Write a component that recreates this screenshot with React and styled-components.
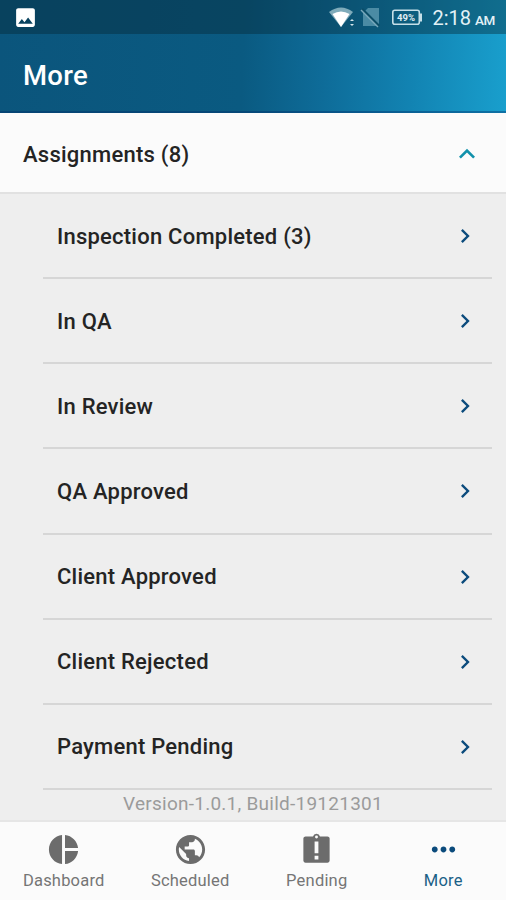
import React from "react";
import styled, { createGlobalStyle } from "styled-components";
import {
  MdPieChart,
  MdPublic,
  MdMoreHoriz,
  MdChevronRight,
  MdExpandLess,
  MdImage
} from "react-icons/md";

const colors = {
  text: "#242424",
  grey: "#6c6c6c",
  navy: "#0b4b7c",
  teal: "#1191ab"
};

const GlobalStyle = createGlobalStyle`
  * {
    box-sizing: border-box;
  }
  body {
    margin: 0;
    font-family: Roboto, "Liberation Sans", sans-serif;
    color: ${colors.text};
  }
`;
const Screen = styled.div`
  display: flex;
  flex-direction: column;
  width: 506px;
  height: 900px;
  overflow: hidden;
  background: #eeeeee;
`;
const Header = styled.header`
  flex: none;
  height: 113px;
  border-bottom: 2px solid rgba(0, 45, 105, 0.4);
  background: linear-gradient(
    92deg,
    #0b557c 0%,
    #0a5a81 48%,
    #0e6c99 64%,
    #1283b2 81%,
    #199fcd 100%
  );
  background-origin: border-box;
`;
const StatusBar = styled.div`
  display: flex;
  align-items: center;
  justify-content: space-between;
  height: 34px;
  padding: 0 11px 0 13px;
  color: #ffffff;
  background: rgba(5, 37, 50, 0.4);
`;
const StatusIcons = styled.div`
  display: flex;
  align-items: center;
`;
const Clock = styled.div`
  display: flex;
  align-items: baseline;
  margin-left: 9px;
  padding-top: 4px;
  font-size: 20px;
  line-height: 30px;
  color: #e3f1f6;
`;
const Meridiem = styled.span`
  margin-left: 4px;
  font-size: 13.5px;
  font-weight: 500;
  letter-spacing: -0.4px;
`;
const Title = styled.h1`
  margin: 0;
  padding-left: 23px;
  font-size: 27.5px;
  font-weight: 500;
  line-height: 83px;
  letter-spacing: 0.3px;
  color: #ffffff;
`;
const SectionHeader = styled.div`
  display: flex;
  flex: none;
  align-items: center;
  justify-content: space-between;
  height: 81px;
  padding: 3px 23px 0;
  border-bottom: 2px solid #e1e1e1;
  font-size: 22px;
  font-weight: 500;
  letter-spacing: 0.25px;
  background: #fbfbfb;
  svg {
    color: ${colors.teal};
  }
`;
const List = styled.div`
  flex: none;
  margin: 0 14px 0 43px;
`;
const Row = styled.div`
  display: flex;
  align-items: center;
  justify-content: space-between;
  height: 85.15px;
  padding: 1px 13.5px 0 14px;
  border-bottom: 2px solid #d6d6d6;
  font-size: 22px;
  font-weight: 500;
  letter-spacing: 0.23px;
  svg {
    color: ${colors.navy};
  }
`;
const Version = styled.div`
  flex: 1;
  font-size: 19px;
  line-height: 27px;
  letter-spacing: 0.25px;
  text-align: center;
  color: #9b9b9b;
`;
const TabBar = styled.nav`
  display: flex;
  flex: none;
  height: 80px;
  border-top: 2px solid #e6e6e6;
  background: #fbfbfb;
`;
const Tab = styled.div`
  display: flex;
  flex: 1;
  flex-direction: column;
  align-items: center;
  padding: 10px 0 0 1px;
  font-size: 16.5px;
  line-height: 27px;
  letter-spacing: 0.2px;
  color: ${props => (props.$active ? "#1b6187" : "#757575")};
  svg {
    color: ${props => (props.$active ? colors.navy : colors.grey)};
  }
`;

const StatusSvg = () => (
  <svg width="94" height="34" viewBox="0 0 94 34">
    <path d="M0 12Q12 3 24 12L12 27Z" fill="#7fabba" />
    <path d="M3.5 14Q12 9 20.5 14L12 27Z" fill="#ffffff" />
    <path d="M21 21l2-2 2 2zM21 24l2 2 2-2z" fill="#d5e5eb" />
    <path d="M39 8h11v17L35 12z" fill="#4b8ba4" />
    <path d="M34 10v16h15z" fill="#4b8ba4" />
    <path d="M33 9l17 17" stroke="#0c4e68" strokeWidth="2.5" />
    <path d="M32 10l17 17" stroke="#7aa9bc" strokeWidth="1.5" />
    <rect
      x="63.8"
      y="10.3"
      width="26.5"
      height="14"
      rx="2"
      fill="none"
      stroke="#c5dfe8"
      strokeWidth="1.6"
    />
    <path d="M92 13.5v8" stroke="#c5dfe8" strokeWidth="2" />
    <text
      x="77"
      y="21"
      fill="#e0eff5"
      fontSize="9.5"
      fontWeight="700"
      textAnchor="middle"
    >
      49%
    </text>
  </svg>
);

// clipboard with a tall cut-out exclamation mark
const PendingIcon = ({ size }) => (
  <svg width={size} height={size} viewBox="0 0 24 24" fill="currentColor">
    <path
      fillRule="evenodd"
      d="M4.5 3h5.1a2.5 2.5 0 0 1 4.8 0h5.1C20.5 3 21 3.7 21 4.5v15c0 .8-.6 1.5-1.5 1.5h-15C3.6 21 3 20.3 3 19.5v-15C3 3.7 3.6 3 4.5 3zM10.7 6.5v8h2.6v-8zM10.7 16.3v2.5h2.6v-2.5zM12 2.4a1 1 0 1 0 0 2 1 1 0 0 0 0-2z"
    />
  </svg>
);

const assignments = [
  "Inspection Completed (3)",
  "In QA",
  "In Review",
  "QA Approved",
  "Client Approved",
  "Client Rejected",
  "Payment Pending"
];

const tabs = [
  { label: "Dashboard", Icon: MdPieChart },
  { label: "Scheduled", Icon: MdPublic },
  { label: "Pending", Icon: PendingIcon },
  { label: "More", Icon: MdMoreHoriz, active: true }
];

const App = () => {
  return (
    <Screen>
      <GlobalStyle />
      <Header>
        <StatusBar>
          <MdImage size={25} />
          <StatusIcons>
            <StatusSvg />
            <Clock>
              2:18<Meridiem>AM</Meridiem>
            </Clock>
          </StatusIcons>
        </StatusBar>
        <Title>More</Title>
      </Header>
      <SectionHeader>
        Assignments (8)
        <MdExpandLess size={32} />
      </SectionHeader>
      <List>
        {assignments.map(name => (
          <Row key={name}>
            {name}
            <MdChevronRight size={28} />
          </Row>
        ))}
      </List>
      <Version>Version-1.0.1, Build-19121301</Version>
      <TabBar>
        {tabs.map(({ label, Icon, active }) => (
          <Tab key={label} $active={active}>
            <Icon size={35} />
            {label}
          </Tab>
        ))}
      </TabBar>
    </Screen>
  );
};

export default App;
